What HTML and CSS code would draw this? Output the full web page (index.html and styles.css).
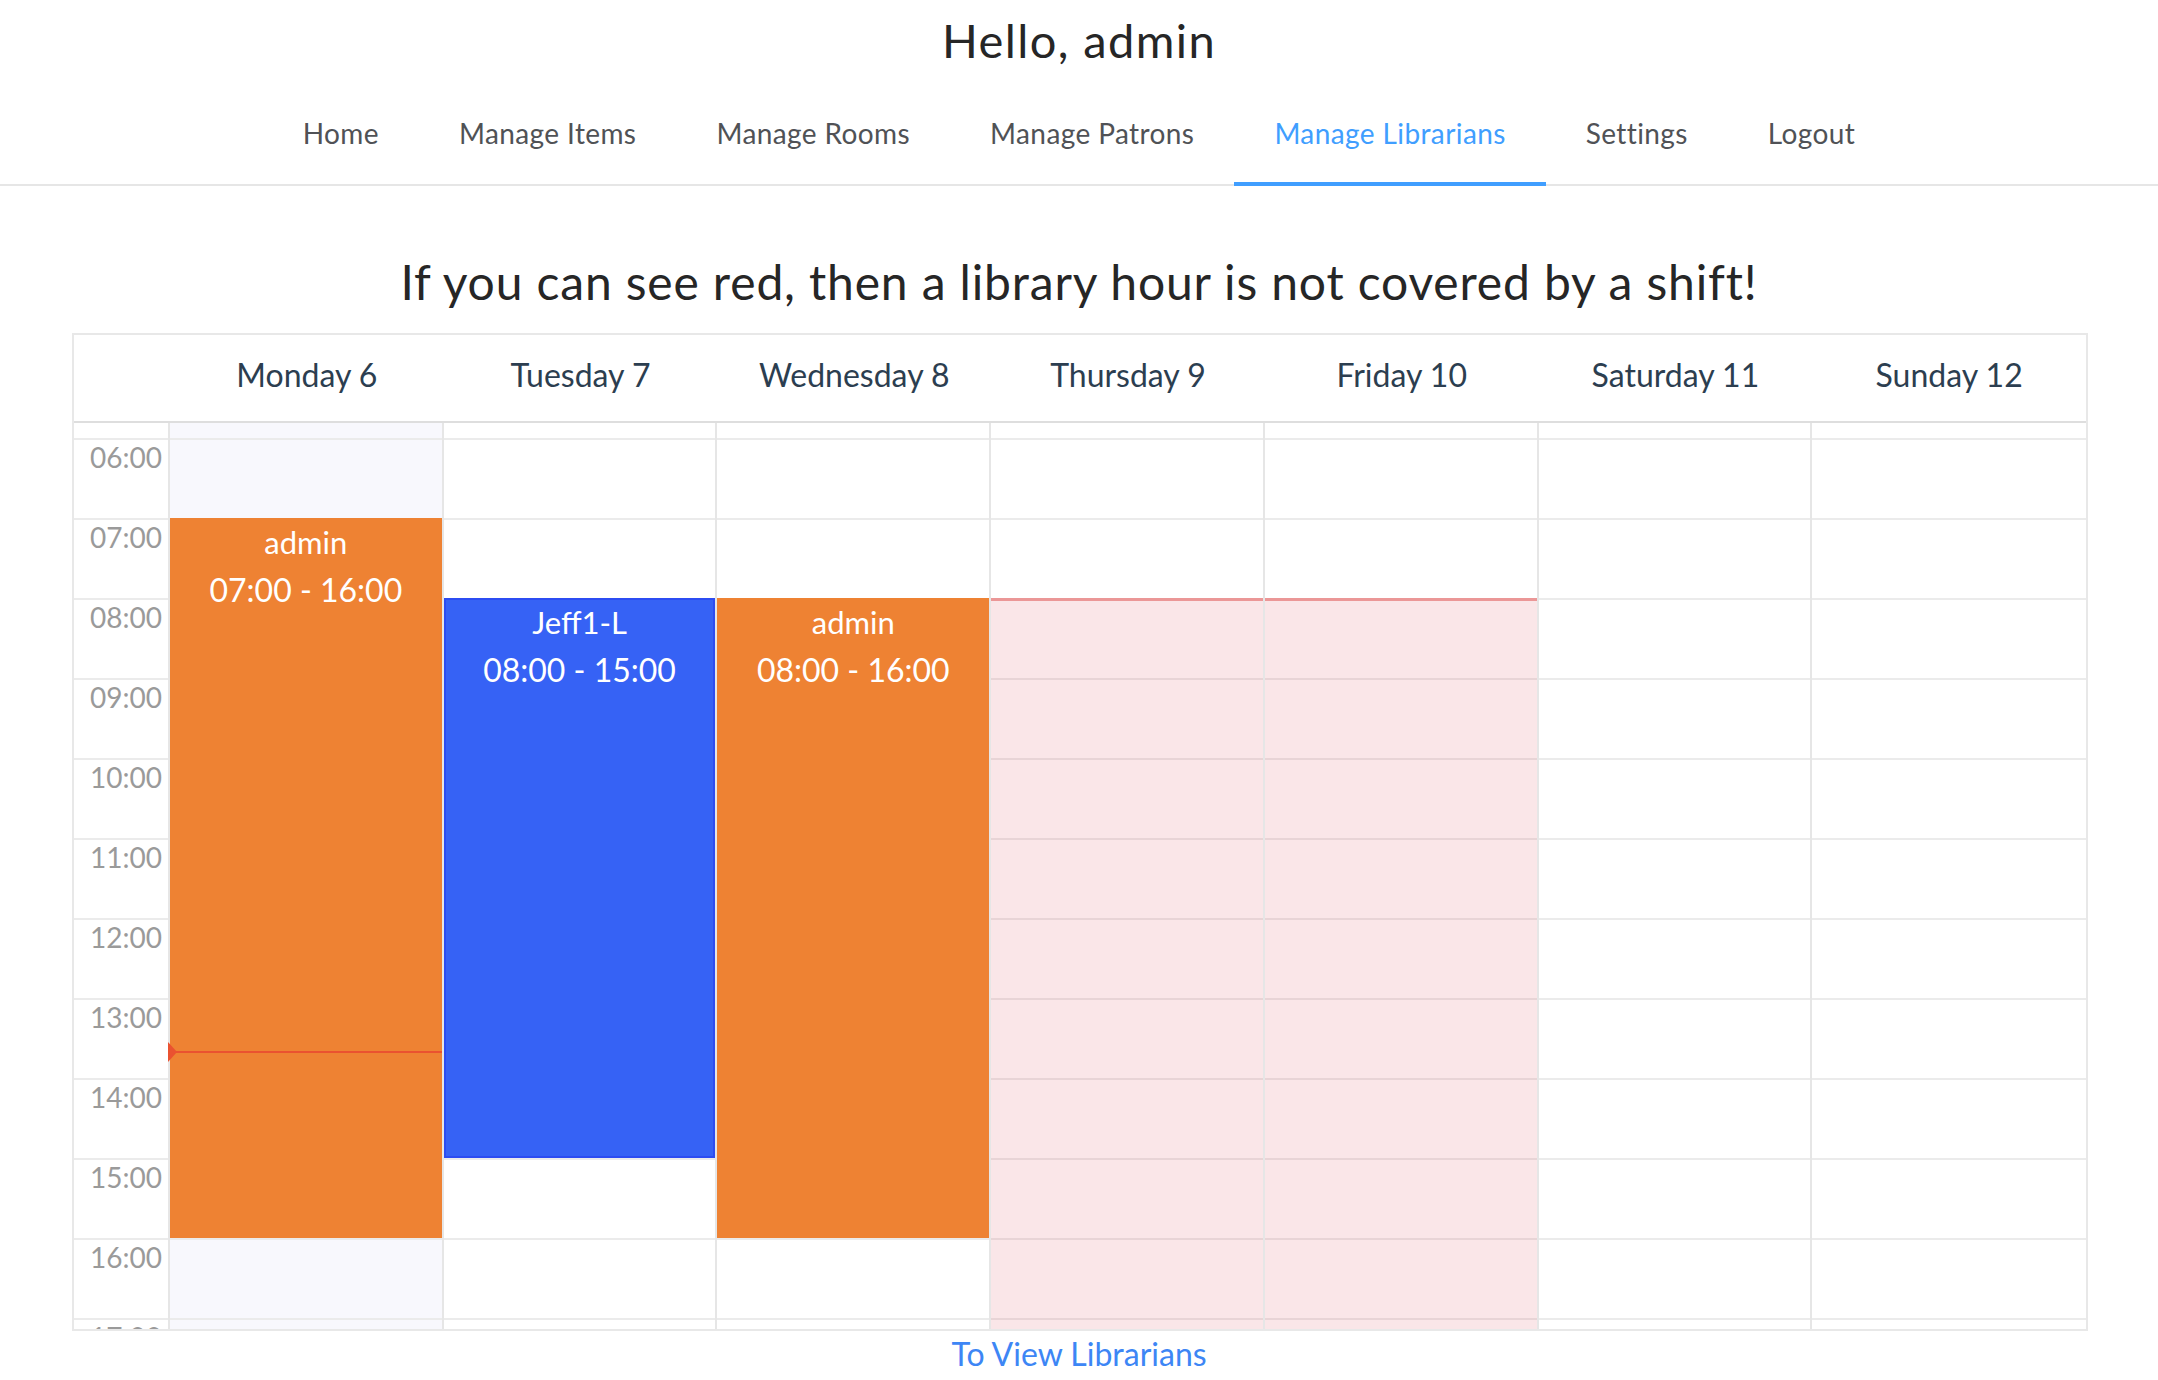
FILE: index.html
```html
<!DOCTYPE html>
<html lang="en">
<head>
<meta charset="utf-8">
<title>Manage Librarians</title>
<link rel="stylesheet" href="styles.css">
</head>
<body>
<header class="top">
  <h1 class="greeting">Hello, admin</h1>
  <nav class="menu">
    <a class="menu-item">Home</a>
    <a class="menu-item">Manage Items</a>
    <a class="menu-item">Manage Rooms</a>
    <a class="menu-item">Manage Patrons</a>
    <a class="menu-item is-active">Manage Librarians</a>
    <a class="menu-item">Settings</a>
    <a class="menu-item">Logout</a>
  </nav>
</header>
<main class="page">
  <h2 class="notice">If you can see red, then a library hour is not covered by a shift!</h2>
  <div class="cal">
    <div class="cal-head">
      <div class="head-gutter"></div>
      <div class="head-day">Monday 6</div>
      <div class="head-day">Tuesday 7</div>
      <div class="head-day">Wednesday 8</div>
      <div class="head-day">Thursday 9</div>
      <div class="head-day">Friday 10</div>
      <div class="head-day">Saturday 11</div>
      <div class="head-day">Sunday 12</div>
    </div>
    <div class="cal-body">
      <div class="cal-scroll">
        <div class="gutter">
          <div class="slot"></div>
          <div class="slot"><span class="time">06:00</span></div>
          <div class="slot"><span class="time">07:00</span></div>
          <div class="slot"><span class="time">08:00</span></div>
          <div class="slot"><span class="time">09:00</span></div>
          <div class="slot"><span class="time">10:00</span></div>
          <div class="slot"><span class="time">11:00</span></div>
          <div class="slot"><span class="time">12:00</span></div>
          <div class="slot"><span class="time">13:00</span></div>
          <div class="slot"><span class="time">14:00</span></div>
          <div class="slot"><span class="time">15:00</span></div>
          <div class="slot"><span class="time">16:00</span></div>
          <div class="slot"><span class="time">17:00</span></div>
        </div>

        <div class="day today">
          <div class="slot"></div><div class="slot"></div><div class="slot"></div><div class="slot"></div><div class="slot"></div><div class="slot"></div><div class="slot"></div><div class="slot"></div><div class="slot"></div><div class="slot"></div><div class="slot"></div><div class="slot"></div><div class="slot"></div>
          <div class="event shift-orange" style="top:160px;height:720px">
            <div class="event-title">admin</div>
            <div class="event-time">07:00 - 16:00</div>
          </div>
          <div class="now-line" style="top:693px"></div>
        </div>

        <div class="day">
          <div class="slot"></div><div class="slot"></div><div class="slot"></div><div class="slot"></div><div class="slot"></div><div class="slot"></div><div class="slot"></div><div class="slot"></div><div class="slot"></div><div class="slot"></div><div class="slot"></div><div class="slot"></div><div class="slot"></div>
          <div class="event shift-blue" style="top:240px;height:560px">
            <div class="event-title">Jeff1-L</div>
            <div class="event-time">08:00 - 15:00</div>
          </div>
        </div>

        <div class="day">
          <div class="slot"></div><div class="slot"></div><div class="slot"></div><div class="slot"></div><div class="slot"></div><div class="slot"></div><div class="slot"></div><div class="slot"></div><div class="slot"></div><div class="slot"></div><div class="slot"></div><div class="slot"></div><div class="slot"></div>
          <div class="event shift-orange" style="top:240px;height:640px">
            <div class="event-title">admin</div>
            <div class="event-time">08:00 - 16:00</div>
          </div>
        </div>

        <div class="day">
          <div class="slot"></div><div class="slot"></div><div class="slot"></div><div class="slot"></div><div class="slot"></div><div class="slot"></div><div class="slot"></div><div class="slot"></div><div class="slot"></div><div class="slot"></div><div class="slot"></div><div class="slot"></div><div class="slot"></div>
          <div class="uncovered" style="top:240px"></div>
        </div>

        <div class="day">
          <div class="slot"></div><div class="slot"></div><div class="slot"></div><div class="slot"></div><div class="slot"></div><div class="slot"></div><div class="slot"></div><div class="slot"></div><div class="slot"></div><div class="slot"></div><div class="slot"></div><div class="slot"></div><div class="slot"></div>
          <div class="uncovered" style="top:240px"></div>
        </div>

        <div class="day">
          <div class="slot"></div><div class="slot"></div><div class="slot"></div><div class="slot"></div><div class="slot"></div><div class="slot"></div><div class="slot"></div><div class="slot"></div><div class="slot"></div><div class="slot"></div><div class="slot"></div><div class="slot"></div><div class="slot"></div>
        </div>

        <div class="day">
          <div class="slot"></div><div class="slot"></div><div class="slot"></div><div class="slot"></div><div class="slot"></div><div class="slot"></div><div class="slot"></div><div class="slot"></div><div class="slot"></div><div class="slot"></div><div class="slot"></div><div class="slot"></div><div class="slot"></div>
        </div>
      </div>
    </div>
  </div>
  <a class="back-link">To View Librarians</a>
</main>
</body>
</html>
```

FILE: styles.css
```css
html {
  overflow: hidden;
}

body {
  margin: 0;
  font-family: "Lato", "Helvetica", "Liberation Sans", sans-serif;
  color: #2c3e50;
  text-align: center;
  background: #ffffff;
}

.greeting {
  margin: 13px 0 0;
  font-size: 47px;
  line-height: 55px;
  font-weight: 400;
  letter-spacing: 1.4px;
  color: #262626;
}

.menu {
  display: flex;
  justify-content: center;
  border-bottom: 2px solid #e6e6e6;
}

.menu-item {
  padding: 45px 40px 29px;
  line-height: 40px;
  font-size: 28px;
  color: #505256;
  border-bottom: 4px solid transparent;
  margin-bottom: -2px;
  letter-spacing: 0.4px;
}

.menu-item.is-active {
  color: #409eff;
  border-bottom-color: #409eff;
}

.page {
  display: flex;
  flex-direction: column;
}

.notice {
  margin: 67px 0 22px;
  font-size: 48px;
  line-height: 57.6px;
  font-weight: 400;
  letter-spacing: 0.85px;
  color: #262626;
}

.cal {
  margin: 0 70px 0 72px;
  border: 2px solid #e8e8e8;
}

.cal-head {
  display: grid;
  grid-template-columns: 96px repeat(7, 1fr);
  border-bottom: 2px solid #dedede;
}

.head-day {
  font-size: 32px;
  line-height: 80px;
  padding-bottom: 6px;
  color: #2c3e50;
}

.cal-body {
  height: 906px;
  overflow: hidden;
}

.cal-scroll {
  margin-top: -65px;
  display: grid;
  grid-template-columns: 96px repeat(7, 1fr);
}

.gutter {
  border-right: 2px solid #e6e6e6;
}

.slot {
  height: 80px;
  box-sizing: border-box;
  border-top: 2px solid #ebebeb;
}

.time {
  display: block;
  text-align: right;
  padding-right: 6px;
  font-size: 28px;
  line-height: 34px;
  color: #9a9a9a;
}

.day {
  position: relative;
  border-right: 2px solid #e6e6e6;
}

.day:last-child {
  border-right: none;
}

.day.today {
  background: #f8f8fd;
}

.event {
  position: absolute;
  left: 0;
  right: 0;
  box-sizing: border-box;
  padding-top: 3px;
  color: #ffffff;
  text-align: center;
}

.shift-orange {
  background: #ee8233;
}

.shift-blue {
  background: #3662f5;
  box-shadow: inset 0 0 0 2px #2c4cf2;
}

.event-title {
  font-size: 31px;
  line-height: 42px;
}

.event-time {
  margin-top: 7px;
  font-size: 32px;
  line-height: 40px;
}

.uncovered {
  position: absolute;
  left: 0;
  right: 0;
  bottom: 0;
  background: rgba(210, 28, 46, 0.11);
  border-top: 3px solid #eb9797;
}

.now-line {
  position: absolute;
  left: 0;
  right: 0;
  height: 2px;
  background: #ea5230;
}

.now-line::before {
  content: "";
  position: absolute;
  left: -2px;
  top: -9px;
  border-left: 9px solid #ea5230;
  border-top: 10px solid transparent;
  border-bottom: 10px solid transparent;
}

.back-link {
  margin-top: 4px;
  font-size: 32px;
  line-height: 38px;
  color: #3d86f5;
  text-decoration: none;
}
```
